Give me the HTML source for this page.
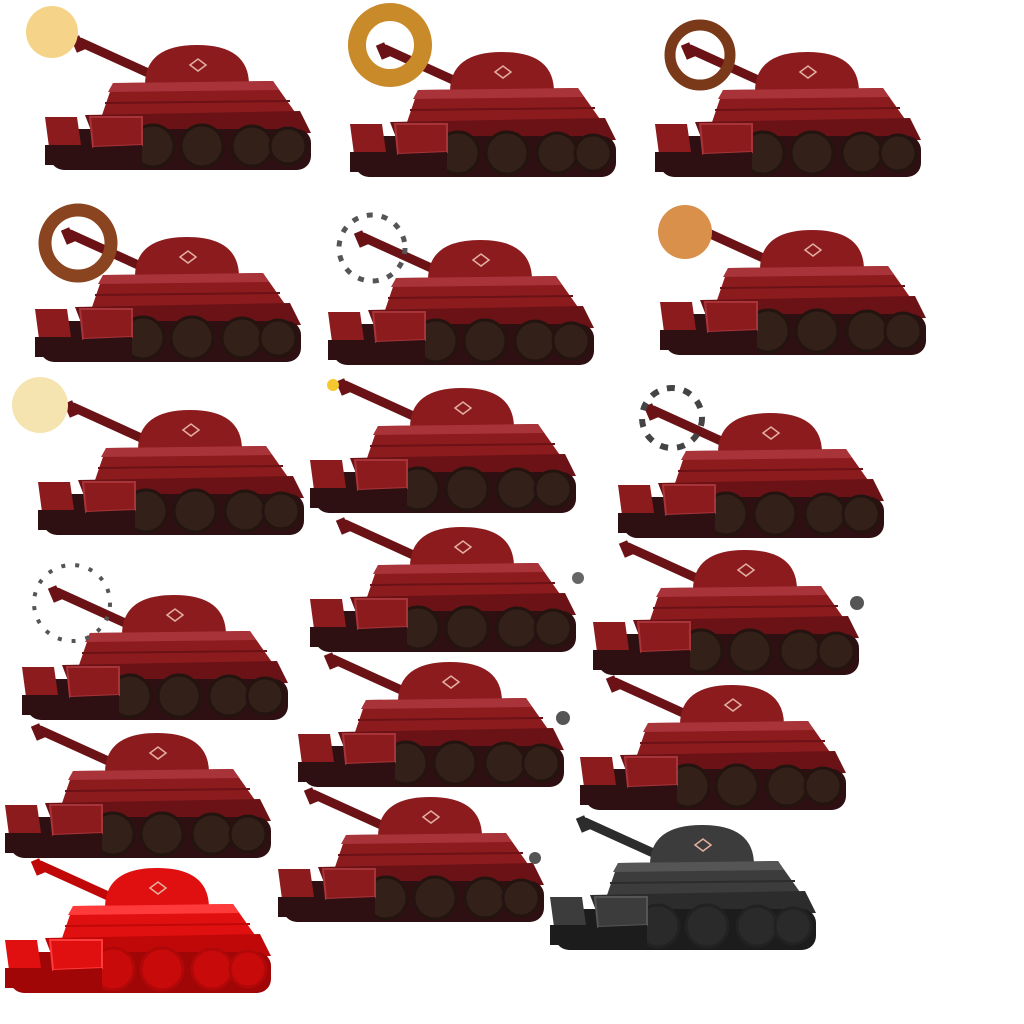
<!DOCTYPE html>
<html><head><style>html,body{margin:0;padding:0;background:#fff;width:1024px;height:1024px;overflow:hidden}</style></head>
<body>
<svg width="1024" height="1024" viewBox="0 0 1024 1024" xmlns="http://www.w3.org/2000/svg">
<defs>
<g id="tk">
  <line x1="35" y1="-3" x2="112" y2="32" stroke="var(--d)" stroke-width="9" stroke-linecap="round"/>
  <line x1="30" y1="-8" x2="36" y2="6" stroke="var(--d)" stroke-width="9"/>
  <path d="M100,40 Q100,0 152,0 Q204,0 204,40 Z" fill="var(--m)"/>
  <path d="M145,20 l8,-6 l8,6 l-8,6z" fill="none" stroke="#e3b0a0" stroke-width="1.5"/>
  <path d="M68,38 L228,36 L252,70 L55,76 Z" fill="var(--m)"/>
  <path d="M68,38 L228,36 L234,45 L63,47 Z" fill="var(--l)"/>
  <path d="M60,58 L245,56" stroke="var(--d)" stroke-width="2"/>
  <path d="M40,70 L255,66 L266,88 L50,96 Z" fill="var(--d)"/>
  <rect x="5" y="84" width="261" height="41" rx="14" fill="var(--t)"/>
  <g fill="var(--w)" stroke="var(--r)" stroke-width="3">
  <circle cx="108" cy="101" r="21"/>
  <circle cx="157" cy="101" r="21"/>
  <circle cx="207" cy="101" r="20"/>
  <circle cx="243" cy="101" r="18"/>
  </g>
  <path d="M0,72 L32,72 L36,100 L4,102 Z" fill="var(--m)"/>
  <rect x="0" y="100" width="36" height="20" fill="var(--t)"/>
  <path d="M45,72 L97,72 L97,100 L48,102 Z" fill="var(--m)" stroke="var(--l)" stroke-width="2"/>
  <path d="M48,102 L97,100 L97,123 L52,125 Z" fill="var(--t)"/>
</g>
</defs>
<g style="--m:#8c1b1e;--d:#6a1216;--l:#a8343a;--t:#2e1012;--w:#332019;--r:#241410">
  <use href="#tk" x="45" y="45"/>
  <use href="#tk" x="350" y="52"/>
  <use href="#tk" x="655" y="52"/>
  <use href="#tk" x="35" y="237"/>
  <use href="#tk" x="328" y="240"/>
  <use href="#tk" x="660" y="230"/>
  <use href="#tk" x="38" y="410"/>
  <use href="#tk" x="310" y="388"/>
  <use href="#tk" x="618" y="413"/>
  <use href="#tk" x="22" y="595"/>
  <use href="#tk" x="310" y="527"/>
  <use href="#tk" x="593" y="550"/>
  <use href="#tk" x="5" y="733"/>
  <use href="#tk" x="298" y="662"/>
  <use href="#tk" x="580" y="685"/>
  <use href="#tk" x="278" y="797"/>
</g>
<g style="--m:#e01010;--d:#c00808;--l:#ff3a3a;--t:#a00606;--w:#c80a0a;--r:#b00808"><use href="#tk" x="5" y="868"/></g>
<g style="--m:#3c3c3c;--d:#2c2c2c;--l:#555;--t:#1c1c1c;--w:#2a2a2a;--r:#222"><use href="#tk" x="550" y="825"/></g>
<!-- muzzle effects -->
<circle cx="52" cy="32" r="26" fill="#f5d48a"/>
<circle cx="390" cy="45" r="33" fill="none" stroke="#c98a2a" stroke-width="18"/>
<circle cx="700" cy="55" r="30" fill="none" stroke="#7a3a1a" stroke-width="11"/>
<circle cx="78" cy="243" r="33" fill="none" stroke="#8a4420" stroke-width="13"/>
<circle cx="372" cy="248" r="33" fill="none" stroke="#555" stroke-width="5" stroke-dasharray="6 9"/>
<circle cx="685" cy="232" r="27" fill="#d8904a"/>
<circle cx="40" cy="405" r="28" fill="#f5e4b0"/>
<circle cx="333" cy="385" r="6" fill="#f5c830"/>
<circle cx="672" cy="418" r="30" fill="none" stroke="#444" stroke-width="6" stroke-dasharray="8 9"/>
<circle cx="72" cy="603" r="38" fill="none" stroke="#555" stroke-width="4" stroke-dasharray="4 10"/>
<circle cx="578" cy="578" r="6" fill="#666"/>
<circle cx="857" cy="603" r="7" fill="#555"/>
<circle cx="563" cy="718" r="7" fill="#555"/>
<circle cx="535" cy="858" r="6" fill="#555"/>
</svg>
</body></html>
